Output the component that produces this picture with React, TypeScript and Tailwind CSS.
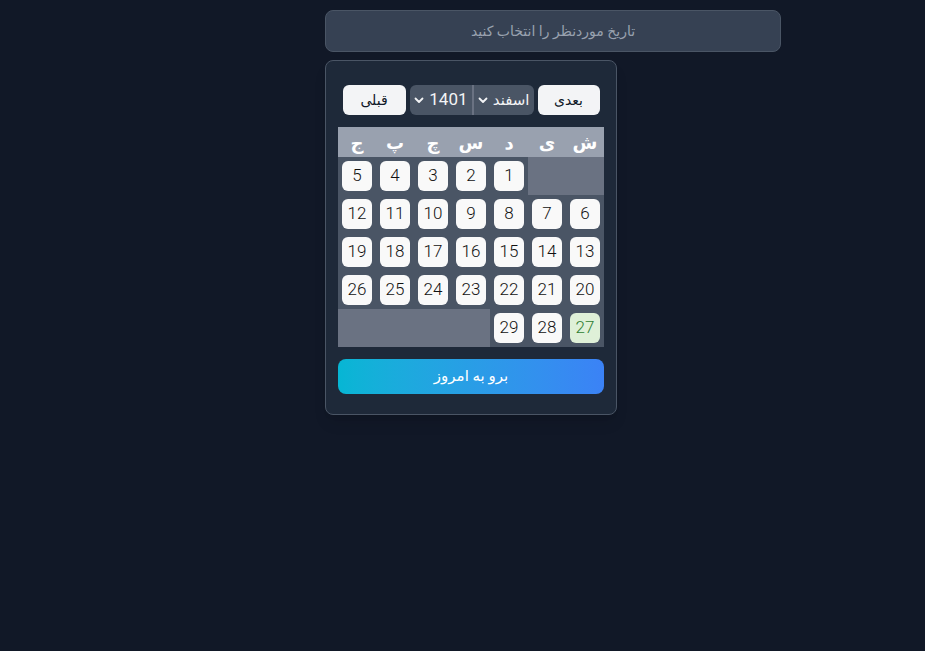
import React from "react";

const weekDays = ["ش", "ی", "د", "س", "چ", "پ", "ج"];

// null = empty slot outside the month
const weeks: (number | null)[][] = [
  [null, null, 1, 2, 3, 4, 5],
  [6, 7, 8, 9, 10, 11, 12],
  [13, 14, 15, 16, 17, 18, 19],
  [20, 21, 22, 23, 24, 25, 26],
  [27, 28, 29, null, null, null, null],
];

const TODAY = 27;

function Chevron() {
  return (
    <svg className="h-[10px] w-[10px] shrink-0" viewBox="0 0 10 10" fill="none" stroke="currentColor" strokeWidth="1.8" strokeLinecap="round" strokeLinejoin="round">
      <path d="M1.5 3.5L5 7l3.5-3.5" />
    </svg>
  );
}

function FakeSelect({ label, className }: { label: string; className?: string }) {
  return (
    <div className={`flex h-full w-[62px] items-center justify-between pr-[4px] pl-[4px] text-gray-100 ${className ?? ""}`}>
      <span className="whitespace-nowrap">{label}</span>
      <Chevron />
    </div>
  );
}

export default function App() {
  return (
    <div className="min-h-[651px] w-full bg-[#111827] pt-[10px] font-['Roboto','DejaVu_Sans',sans-serif]">
      <div className="ml-[325px] w-[456px]">
        <div dir="rtl" className="flex h-[42px] w-full items-center justify-center rounded-lg border border-gray-600 bg-gray-700 text-[14px] text-gray-400">
          تاریخ موردنظر را انتخاب کنید
        </div>

        <div dir="rtl" className="mt-2 w-[292px] rounded-lg border border-gray-600 bg-gray-800 px-3 pt-6 pb-5 shadow-lg">
          <div className="flex h-[30px] items-center justify-center gap-1">
            <button className="h-[30px] w-[62px] rounded-md bg-gray-100 text-[14px] text-gray-900">بعدی</button>
            <div className="flex h-[30px] overflow-hidden rounded-md bg-gray-600">
              <FakeSelect label="اسفند" className="border-l-2 border-gray-500 text-[15px]" />
              <FakeSelect label="1401" className="text-[17px]" />
            </div>
            <button className="h-[30px] w-[63px] rounded-md bg-gray-100 text-[14px] text-gray-900">قبلی</button>
          </div>

          <div className="mt-3">
            <div className="grid h-[30px] grid-cols-7 bg-gray-400">
              {weekDays.map((d) => (
                <div key={d} className="flex items-center justify-center text-[18px] font-bold text-white">
                  {d}
                </div>
              ))}
            </div>
            {weeks.map((week, wi) => (
              <div key={wi} className="grid grid-cols-7 bg-gray-600">
                {week.map((day, di) =>
                  day === null ? (
                    <div key={di} className="h-[38px] bg-gray-500" />
                  ) : (
                    <div key={di} className="flex h-[38px] items-center justify-center">
                      <div
                        className={`flex h-[30px] w-[30px] items-center justify-center rounded-md text-[17px] font-light ${
                          day === TODAY ? "bg-[#dff0d8] text-[#2e7d32]" : "bg-[#f9f9f9] text-[#111111]"
                        }`}
                      >
                        {day}
                      </div>
                    </div>
                  )
                )}
              </div>
            ))}
          </div>

          <button className="mt-3 flex h-[35px] w-full items-center justify-center rounded-lg bg-gradient-to-l from-[#3b82f6] to-[#06b6d4] text-[15px] font-medium text-white">
            برو به امروز
          </button>
        </div>
      </div>
    </div>
  );
}
